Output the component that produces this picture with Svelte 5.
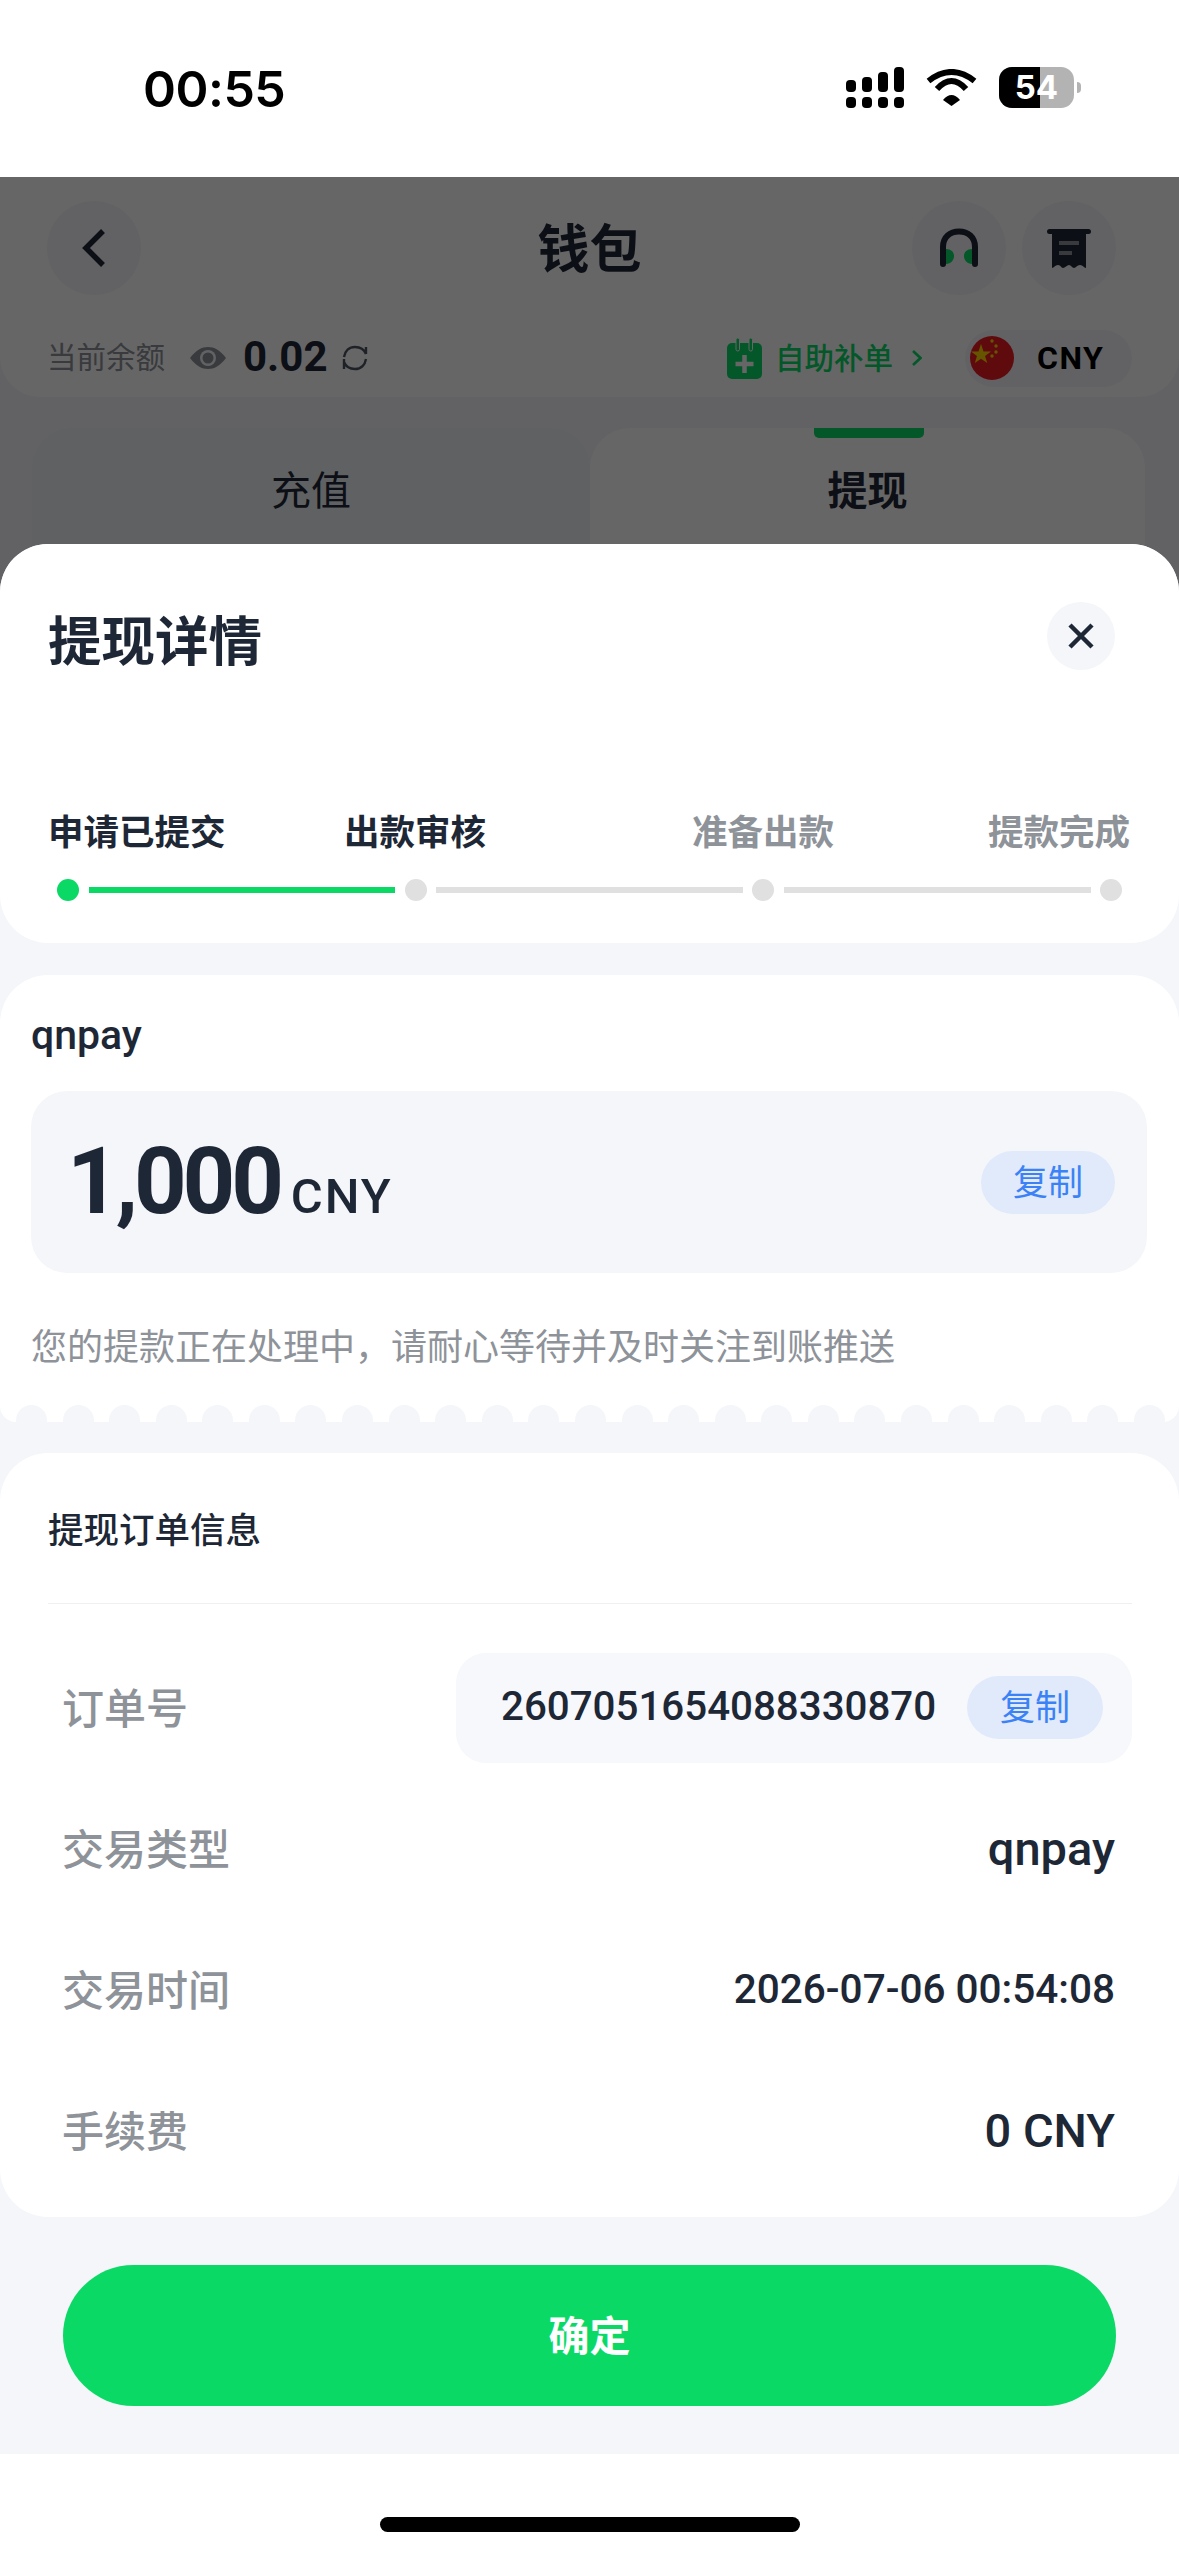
<script>
  const bumps = Array.from({ length: 25 });
  const rows = [
    { label: '交易类型', value: 'qnpay', size: 'wide' },
    { label: '交易时间', value: '2026-07-06 00:54:08', size: 'narrow' },
    { label: '手续费', value: '0 CNY', size: 'wide' }
  ];
</script>

<div class="phone">
  <header class="status">
    <span class="time">00:55</span>
    <div class="status-icons">
      <svg class="signal" width="58" height="41" viewBox="0 0 58 41" fill="#000">
        <rect x="0" y="13" width="10" height="12" rx="4" /><rect x="0" y="30" width="10" height="11" rx="4" />
        <rect x="16" y="10" width="10" height="15" rx="4" /><rect x="16" y="30" width="10" height="11" rx="4" />
        <rect x="32" y="5" width="10" height="20" rx="4" /><rect x="32" y="30" width="10" height="11" rx="4" />
        <rect x="48" y="0" width="10" height="25" rx="4" /><rect x="48" y="30" width="10" height="11" rx="4" />
      </svg>
      <svg class="wifi" width="51" height="37" viewBox="0 0 51 37">
        <path d="M2.5 12Q25.5-6 48.500 12" fill="none" stroke="#000" stroke-width="6" />
        <path d="M11 20Q25.500 4 40 20" fill="none" stroke="#000" stroke-width="6" />
        <path d="M17 31Q25.500 21 34 31L25.500 37Z" fill="#000" />
      </svg>
      <div class="battery"><span class="battery-fill"></span><span class="battery-num">54</span></div>
      <span class="battery-tip"></span>
    </div>
  </header>

  <section class="page">
    <div class="topcard">
      <nav class="nav">
        <span class="round">
          <svg width="26" height="38" viewBox="0 0 26 38" fill="none" stroke="#1e2735" stroke-width="5.500"><path d="M22 2L5 19L22 36" /></svg>
        </span>
        <h1>钱包</h1>
        <div class="nav-right">
          <span class="round">
            <svg width="40" height="40" viewBox="0 0 40 40">
              <path d="M4 36V19C4 9 11 3.500 20 3.500S36 9 36 19V36" fill="none" stroke="#1e2735" stroke-width="6" stroke-linecap="round" />
              <path d="M7 21C12 21 15 24 15 28S12 36 7 36Z" fill="#0bd966" />
              <path d="M33 21C28 21 25 24 25 28S28 36 33 36Z" fill="#0bd966" />
            </svg>
          </span>
          <span class="round">
            <svg width="44" height="41" viewBox="0 0 44 41">
              <rect x="0" y="1" width="44" height="5" rx="2.500" fill="#1e2735" />
              <path d="M5 5H39V40C37 40 36 37 33 37S29 40 27 40 24 37 22 37 18 40 16 40 14 37 11 37 7 40 5 40Z" fill="#1e2735" />
              <rect x="12" y="13" width="20" height="4" fill="#8e9299" /><rect x="12" y="23" width="13" height="4" fill="#8e9299" />
            </svg>
          </span>
        </div>
      </nav>
      <div class="balance">
        <span class="bal-label">当前余额</span>
        <svg class="eye" width="36" height="24" viewBox="0 0 36 24">
          <path d="M0 12C6 4 12 1 18 1S30 4 36 12C30 20 24 23 18 23S6 20 0 12Z" fill="#8e9299" />
          <circle cx="18" cy="12" r="8" fill="#f4f6fa" /><circle cx="18" cy="12" r="5.500" fill="#8e9299" />
        </svg>
        <span class="bal-num">0.02</span>
        <svg class="refresh" width="26" height="26" viewBox="0 0 26 26" fill="none" stroke="#4b5563" stroke-width="2.400">
          <path d="M2 12C3 6 7 2 13 2C18 2 22 4 24 9M24 2V9M24 14C23 20 19 24 13 24C8 24 4 22 2 17M2 24V14" />
        </svg>
        <span class="spacer"></span>
        <svg class="cal" width="35" height="41" viewBox="0 0 35 41">
          <rect x="0" y="5" width="35" height="36" rx="5" fill="#0bd966" />
          <rect x="9" y="0" width="3.500" height="13" rx="1.700" fill="#0bd966" stroke="#fff" stroke-width="1" />
          <rect x="22" y="0" width="3.500" height="13" rx="1.700" fill="#0bd966" stroke="#fff" stroke-width="1" />
          <path d="M17.500 17V35M8.500 26H26.500" stroke="#fff" stroke-width="4.500" />
        </svg>
        <span class="refill">自助补单</span>
        <svg class="chev" width="10" height="16" viewBox="0 0 10 16" fill="none" stroke="#0bd966" stroke-width="2.600"><path d="M1 1L8.500 8L1 15" /></svg>
        <div class="cur">
          <svg class="flag" width="44" height="44" viewBox="0 0 44 44">
            <circle cx="22" cy="22" r="22" fill="#ee1c25" />
            <path d="M11 8L13.500 15.500H21L15 20L17.300 27L11 22.800L4.800 27L7 20L1 15.500H8.500Z" fill="#ffd400" />
            <circle cx="22" cy="5" r="1.700" fill="#ffd400" /><circle cx="26" cy="10" r="1.700" fill="#ffd400" />
            <circle cx="26" cy="16" r="1.700" fill="#ffd400" /><circle cx="22" cy="20" r="1.700" fill="#ffd400" />
          </svg>
          <span class="cur-code">CNY</span>
        </div>
      </div>
    </div>
    <div class="tabs">
      <div class="tab">充值</div>
      <div class="tab on"><i></i>提现</div>
    </div>
    <div class="scrim"></div>
  </section>

  <section class="sheet">
    <div class="card head">
      <div class="sheet-title">
        <h2>提现详情</h2>
        <span class="close">
          <svg width="26" height="26" viewBox="0 0 26 26" fill="none" stroke="#1e2735" stroke-width="4.500"><path d="M2 2L24 24M24 2L2 24" /></svg>
        </span>
      </div>
      <div class="step-labels">
        <span class="done s1">申请已提交</span>
        <span class="done s2">出款审核</span>
        <span class="todo s3">准备出款</span>
        <span class="todo s4">提款完成</span>
      </div>
      <div class="track">
        <span class="dot green"></span><span class="line green"></span>
        <span class="dot"></span><span class="line"></span>
        <span class="dot"></span><span class="line"></span>
        <span class="dot"></span>
      </div>
    </div>

    <div class="card ticket">
      <div class="method">qnpay</div>
      <div class="amount">
        <span class="big">1,000</span><span class="unit">CNY</span>
        <span class="copy a-copy">复制</span>
      </div>
      <p class="note">您的提款正在处理中，请耐心等待并及时关注到账推送</p>
      <div class="scallops">
        {#each bumps as _}<span></span>{/each}
      </div>
    </div>

    <div class="card info">
      <h3>提现订单信息</h3>
      <div class="row">
        <span class="k">订单号</span>
        <div class="order">
          <span class="v">2607051654088330870</span>
          <span class="copy">复制</span>
        </div>
      </div>
      {#each rows as r}
        <div class="row">
          <span class="k">{r.label}</span>
          <span class="v pad {r.size}">{r.value}</span>
        </div>
      {/each}
    </div>

    <div class="footer"><button>确定</button></div>
  </section>

  <div class="home"><span></span></div>
</div>

<style>
  :global(body) { margin: 0; background: #fff; }
  .phone {
    width: 1179px; height: 2556px; overflow: hidden; background: #fff;
    display: flex; flex-direction: column;
    font-family: "Noto Sans CJK SC", sans-serif; color: #1e2735;
  }
  h1, h2, h3, p { margin: 0; }

  .status { height: 177px; flex: none; position: relative; display: flex; }
  .time { font: 600 50px/1 Inter, sans-serif; color: #000; margin: 64px 0 0 143px; letter-spacing: -0.5px; }
  .status-icons { display: flex; margin: 67px 0 0 auto; padding-right: 98px; align-items: flex-start; }
  .signal { display: block; }
  .wifi { display: block; margin: 2px 0 0 22px; }
  .battery {
    width: 75px; height: 41px; margin-left: 22px; border-radius: 13px; overflow: hidden;
    background: #b3b3b3; position: relative;
  }
  .battery-fill { position: absolute; left: 0; top: 0; bottom: 0; width: 41px; background: #000; }
  .battery-num {
    position: absolute; inset: 0; text-align: center;
    font: 700 33px/41px Inter, sans-serif; color: #fff;
  }
  .battery-tip { width: 4px; height: 11px; margin: 15px 0 0 3px; background: #b3b3b3; border-radius: 0 6px 6px 0; }

  .page { height: 415px; margin-bottom: -48px; flex: none; position: relative; background: #f4f6fa; overflow: hidden; }
  .scrim { position: absolute; inset: 0; background: rgba(0, 0, 0, 0.6); }
  .topcard { height: 220px; background: #fff; border-radius: 0 0 40px 40px; }
  .nav { height: 142px; padding: 0 63px 0 47px; display: flex; align-items: center; position: relative; }
  .nav h1 {
    position: absolute; left: 0; right: 0; text-align: center;
    font-size: 52px; font-weight: 700; line-height: 1; padding-bottom: 4px; top: 43px;
  }
  .nav-right { margin-left: auto; display: flex; gap: 16px; }
  .round { width: 94px; height: 94px; border-radius: 50%; background: #f4f6fa; display: flex; align-items: center; justify-content: center; }
  .balance { height: 78px; padding: 0 47px; display: flex; align-items: center; }
  .bal-label { font-size: 29.500px; color: #8e9299; line-height: 1; padding-bottom: 4px; }
  .eye { margin-left: 25px; }
  .bal-num { font: 700 42px/1 Roboto, sans-serif; margin-left: 17px; padding-bottom: 2px; }
  .refresh { margin-left: 14px; }
  .spacer { flex: 1; }
  .cal { flex: none; margin-left: 2px; }
  .refill { font-size: 29.500px; font-weight: 500; color: #0bd966; margin-left: 13px; line-height: 1; padding-bottom: 2px; }
  .chev { margin-left: 19px; }
  .cur { width: 167px; height: 57px; margin: 0 0 0 43px; border-radius: 29px; background: #f4f6fa; display: flex; align-items: center; padding-left: 5px; box-sizing: border-box; flex: none; }
  .cur-code { font: 700 32px/1 Roboto, sans-serif; margin-left: 23px; letter-spacing: 1.500px; color: #000; }
  .tabs { margin: 31px 32px 0; display: grid; grid-template-columns: 558px 555px; }
  .tab { height: 160px; border-radius: 40px 40px 0 0; background: #f0f2f5; text-align: center; font-size: 40px; line-height: 121px; position: relative; }
  .tab.on { background: #fff; font-weight: 700; }
  .tab i { position: absolute; left: 224px; top: 0; width: 110px; height: 10px; background: #0bd966; border-radius: 0 0 5px 5px; }

  .sheet { position: relative; flex: none; height: 1910px; background: #f4f6fa; border-radius: 48px 48px 0 0; display: flex; flex-direction: column; }
  .card { background: #fff; border-radius: 48px; flex: none; }

  .head { height: 399px; margin-bottom: 32px; box-sizing: border-box; }
  .sheet-title { display: flex; align-items: center; justify-content: space-between; padding: 58px 64px 0 48px; height: 68px; }
  .sheet-title h2 { font-size: 53.500px; font-weight: 700; line-height: 1; position: relative; top: 2px; }
  .close { width: 68px; height: 68px; border-radius: 50%; background: #f4f6fa; display: flex; align-items: center; justify-content: center; }
  .step-labels { display: flex; margin-top: 135px; font-size: 35.500px; font-weight: 700; line-height: 50px; padding-left: 48px; }
  .done { color: #1e2735; }
  .todo { color: #8e9299; }
  .s2 { margin-left: 118.500px; }
  .s3 { margin-left: 206px; }
  .s4 { margin-left: 154px; }
  .track { display: flex; align-items: center; margin: 24px 57px 0; }
  .dot { width: 22px; height: 22px; border-radius: 50%; background: #e0e0e0; flex: none; }
  .line { flex: 1; height: 6px; margin: 0 9.500px; background: #e0e0e0; }
  .dot.green, .line.green { background: #0bd966; }

  .ticket { height: 447px; margin-bottom: 31px; border-radius: 48px 48px 16px 16px; position: relative; overflow: hidden; box-sizing: border-box; }
  .method { font: 500 41px/1 Roboto, sans-serif; padding: 40px 0 0 31px; height: 76px; box-sizing: content-box; }
  .amount { margin: 0 32px 0 31px; height: 182px; background: #f4f6fa; border-radius: 36px; display: flex; align-items: center; padding: 0 32px 0 36px; }
  .big { font: 700 92px/1 Roboto, sans-serif; letter-spacing: -4.200px; }
  .unit { font: 500 49px/1 Roboto, sans-serif; margin: 28px 0 0 11px; letter-spacing: 2px; }
  .copy { display: block; margin-left: auto; width: 134px; height: 63px; border-radius: 32px; background: #e1eafb; color: #3b82f6; font-size: 35px; line-height: 58px; text-align: center; flex: none; }
  .note { font-size: 36px; line-height: 50px; color: #8e9299; padding: 46px 0 0 31px; }
  .scallops { position: absolute; left: 16px; right: 14px; bottom: 0; display: flex; justify-content: space-between; }
  .scallops span { width: 31px; height: 17px; border-radius: 16px 16px 0 0; background: #f4f6fa; }

  .info { height: 764px; box-sizing: border-box; padding: 51px 47px 0; }
  .info h3 { font-size: 35.500px; font-weight: 500; line-height: 50px; margin-left: 1px; padding-bottom: 50px; border-bottom: 1px solid #eef0f3; margin-bottom: 32px; height: 50px; position: relative; top: -1px; }
  .row { height: 141px; display: flex; align-items: center; justify-content: space-between; }
  .k { font-size: 42px; font-weight: 500; color: #8e9299; line-height: 1; padding: 0 0 4px 15px; }
  .v { font: 500 40.300px/1 Roboto, sans-serif; }
  .pad { padding-right: 17px; }
  .wide { font-size: 47px; }
  .narrow { font-size: 40.500px; }
  .order { width: 676px; height: 110px; border-radius: 30px; background: #f6f8fc; display: flex; align-items: center; padding: 0 29px 0 45px; box-sizing: border-box; }
  .order .copy { width: 136px; }

  .footer { flex: 1; padding: 48px 63px; box-sizing: border-box; }
  button { width: 100%; height: 141px; border: 0; border-radius: 71px; background: #0bd966; color: #fff; font: 700 41px/1 "Noto Sans CJK SC", sans-serif; padding: 0 0 4px; display: block; }

  .home { height: 102px; flex: none; background: #fff; display: flex; justify-content: center; position: relative; }
  .home span { width: 420px; height: 15px; margin-top: 63px; border-radius: 8px; background: #000; }
</style>
